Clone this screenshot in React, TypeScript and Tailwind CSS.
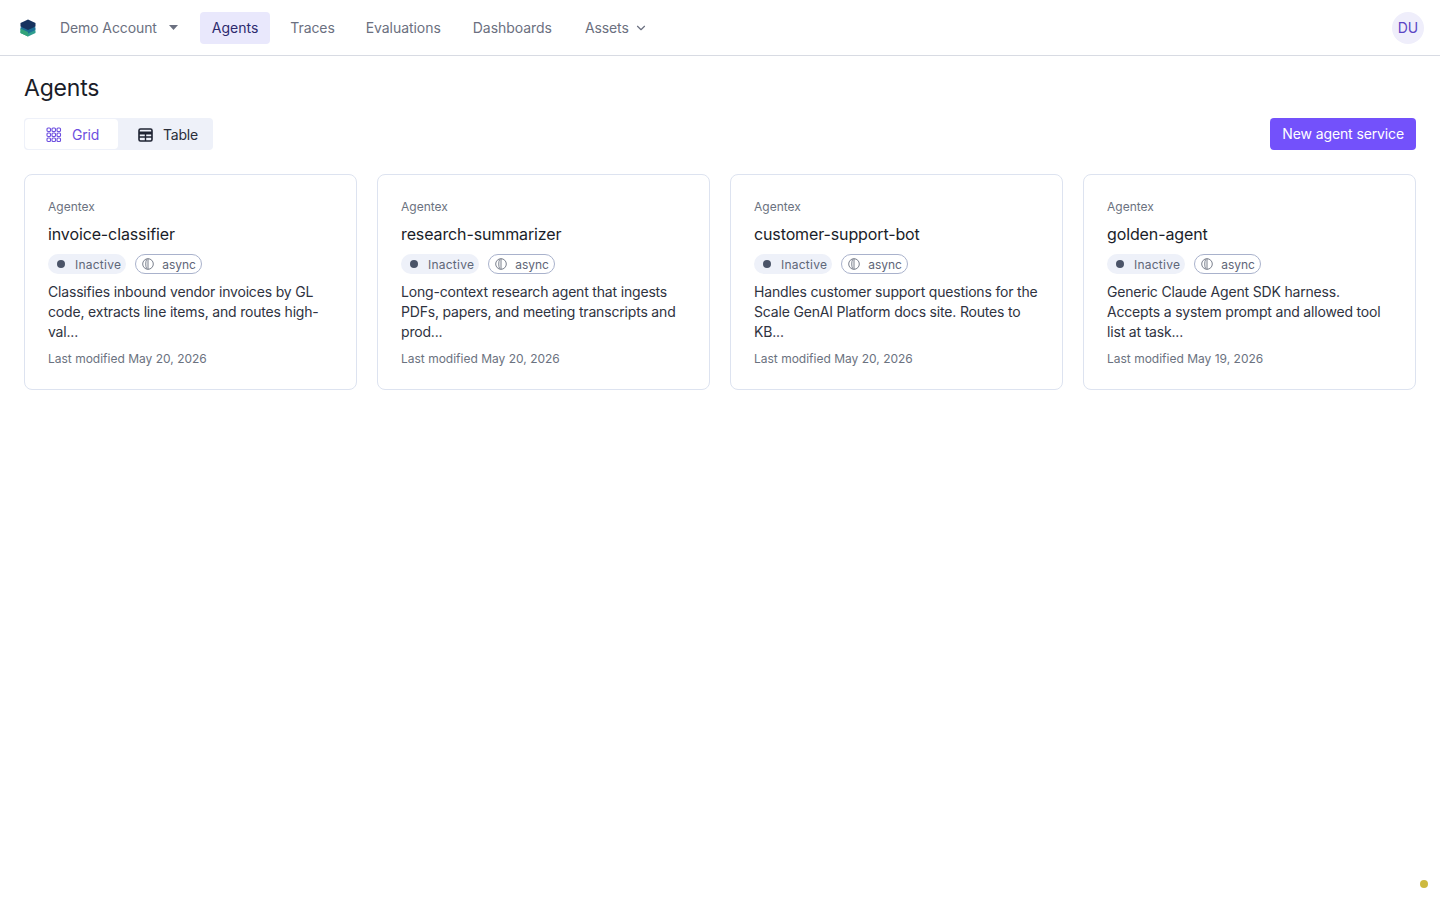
import { ChevronDown } from "lucide-react";

const AGENTS = [
  {
    name: "invoice-classifier",
    desc: "Classifies inbound vendor invoices by GL code, extracts line items, and routes high-val...",
    date: "May 20, 2026",
  },
  {
    name: "research-summarizer",
    desc: "Long-context research agent that ingests PDFs, papers, and meeting transcripts and prod...",
    date: "May 20, 2026",
  },
  {
    name: "customer-support-bot",
    desc: "Handles customer support questions for the Scale GenAI Platform docs site. Routes to KB...",
    date: "May 20, 2026",
  },
  {
    name: "golden-agent",
    desc: "Generic Claude Agent SDK harness. Accepts a system prompt and allowed tool list at task...",
    date: "May 19, 2026",
  },
];

function Logo() {
  return (
    <svg width="16" height="18" viewBox="0 0 16 18" className="shrink-0">
      <path d="M8 8 L15.500 11.500 L15.500 14 L8 17.500 L0.500 14 L0.500 11.500 Z" fill="#2f9e8f" />
      <path d="M8 5 L15.500 8.500 L15.500 11 L8 14.500 L0.500 11 L0.500 8.500 Z" fill="#1c6f95" />
      <path d="M8 0.500 L15.500 4 L15.500 7.500 L8 11 L0.500 7.500 L0.500 4 Z" fill="#16325f" />
      <path d="M0.500 9.500 L8 13 L8 17.500 L0.500 14 Z" fill="#33a37a" />
    </svg>
  );
}

function GridIcon() {
  return (
    <svg width="16" height="16" viewBox="0 0 16 16" fill="none" stroke="#6d4fe0" strokeWidth="1.1">
      {[1, 6, 11].map(y =>
        [1, 6, 11].map(x => <rect key={`${x}-${y}`} x={x} y={y} width="3.500" height="3.500" rx="1" />)
      )}
    </svg>
  );
}

function TableIcon() {
  return (
    <svg width="15" height="14" viewBox="0 0 15 14" fill="none" stroke="#1f2433">
      <rect x="1" y="1" width="13" height="12" rx="1.500" strokeWidth="1.600" />
      <path d="M1 5h13" strokeWidth="3" />
      <path d="M1 9h13M7.500 5v8" strokeWidth="1.400" />
    </svg>
  );
}

function AsyncIcon() {
  return (
    <svg width="12" height="12" viewBox="0 0 12 12" fill="none" stroke="#6b7280" strokeWidth="0.9">
      <circle cx="6" cy="6" r="5.300" />
      <path d="M6 .7v10.600" />
      <path d="M4.500 1.500C3.500 4 3.500 8 4.500 10.500" />
    </svg>
  );
}

function AgentCard({ name, desc, date }: { name: string; desc: string; date: string }) {
  return (
    <div className="flex h-[216px] flex-col rounded-lg border border-[#dde3f0] bg-white px-[23px] pt-[23px]">
      <div className="text-xs leading-[18px] text-[#6b7280]">Agentex</div>
      <div className="mt-[6px] text-base leading-6 tracking-[-0.12px] text-[#1a1d29]">{name}</div>
      <div className="mt-[8px] flex items-center gap-[9px]">
        <span className="flex h-5 items-center gap-[10px] rounded-full bg-[#eef1f9] pr-[5px] pl-[9px] text-xs tracking-[0.02em] text-[#5f6678]">
          <span className="h-2 w-2 rounded-full bg-[#4b5468]" />
          <span className="translate-y-px">Inactive</span>
        </span>
        <span className="flex h-5 items-center gap-[8px] rounded-full border border-[#a9b2cc] pr-[5px] pl-[6px] text-xs text-[#5f6678]">
          <AsyncIcon />
          <span className="translate-y-px">async</span>
        </span>
      </div>
      <p className="mt-[8px] text-sm leading-5 tracking-[-0.18px] text-[#2f333f]">{desc}</p>
      <div className="mt-[8px] text-xs leading-[18px] text-[#6b7280]">Last modified {date}</div>
    </div>
  );
}

export default function App() {
  return (
    <div className="relative h-[900px] bg-white font-['Inter',sans-serif]">
      <nav className="flex h-[56px] items-center border-b border-[#d8dbe3] pr-4 pl-5">
        <Logo />
        <button className="ml-6 flex items-center text-sm tracking-[-0.1px] text-[#6b7080]">
          Demo Account
          <svg width="9" height="5" viewBox="0 0 9 5" className="ml-3">
            <path d="M0 0h9L4.500 5Z" fill="#6b7080" />
          </svg>
        </button>
        <button className="ml-[22px] h-8 rounded bg-[#e9e8fc] px-3 text-sm text-[#2d2a6e]">Agents</button>
        <button className="ml-[20px] text-sm tracking-[-0.1px] text-[#6b7080]">Traces</button>
        <button className="ml-[31px] text-sm tracking-[-0.05px] text-[#6b7080]">Evaluations</button>
        <button className="ml-8 text-sm tracking-[-0.05px] text-[#6b7080]">Dashboards</button>
        <button className="ml-[33px] flex items-center gap-[5px] text-sm tracking-[-0.1px] text-[#6b7080]">
          Assets
          <ChevronDown size={14} />
        </button>
        <div className="ml-auto flex h-8 w-8 items-center justify-center rounded-full bg-[#efeefb] text-sm text-[#5b45c4]">
          DU
        </div>
      </nav>
      <main className="px-6">
        <h1 className="mt-4 text-[23px] leading-8 tracking-[-0.2px] text-[#1a1d29]">Agents</h1>
        <div className="mt-[14px] flex items-center justify-between">
          <div className="flex h-8 rounded bg-[#eef1f9] p-px">
            <button className="flex w-[93px] items-center gap-[10px] rounded-sm bg-white pt-[2px] pl-[21px] text-sm tracking-[-0.2px] text-[#6d4fe0]">
              <GridIcon />
              Grid
            </button>
            <button className="flex w-[94px] items-center gap-[10px] pt-[2px] pl-[20px] text-sm tracking-[-0.2px] text-[#2a2e3a]">
              <TableIcon />
              Table
            </button>
          </div>
          <button className="h-8 rounded bg-[#7351fb] px-3 text-sm tracking-[-0.12px] text-white">New agent service</button>
        </div>
        <div className="mt-6 grid grid-cols-4 gap-5">
          {AGENTS.map(a => (
            <AgentCard key={a.name} {...a} />
          ))}
        </div>
      </main>
      <span className="absolute top-[880px] left-[1420px] h-2 w-2 rounded-full bg-[#cdb93f]" />
    </div>
  );
}
